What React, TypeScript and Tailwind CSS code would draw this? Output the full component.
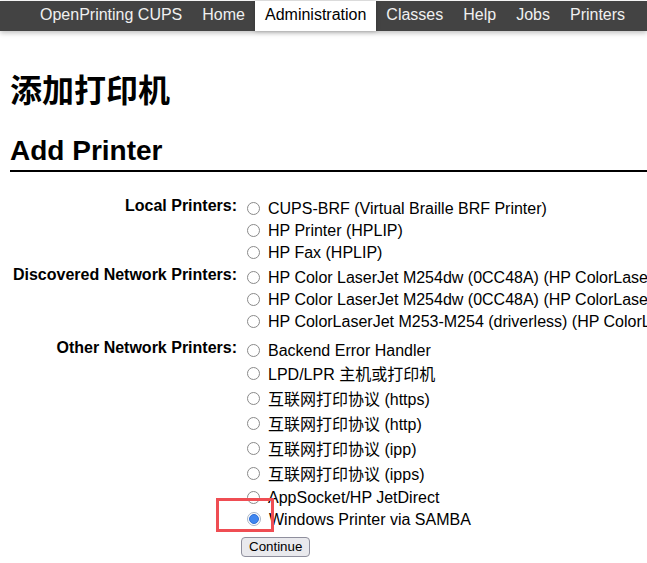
import React from "react";

const SANS = "font-['Liberation_Sans','Noto_Sans_CJK_SC',sans-serif]";

function Radio({ checked = false }: { checked?: boolean }) {
  if (checked) {
    return (
      <span className="ml-[6px] mb-[2px] flex h-[14px] w-[14px] shrink-0 items-center justify-center rounded-full border border-[#a9b4c4] bg-white">
        <span className="h-[10px] w-[10px] rounded-full border border-[#2f6fd6] bg-[#3f86f0]" />
      </span>
    );
  }
  return (
    <span className="ml-[6px] mb-[2px] h-[13px] w-[13px] shrink-0 rounded-full border border-[#8a8a8a] bg-white" />
  );
}

function Row({ text, cjk = false, checked = false }: { text: string; cjk?: boolean; checked?: boolean }) {
  return (
    <div className={`flex items-center whitespace-nowrap ${cjk ? "h-[25px]" : "h-[22px]"}`}>
      <Radio checked={checked} />
      <span className="ml-[8px] text-[16px] leading-[18px] text-black">{text}</span>
    </div>
  );
}

function Label({ children }: { children: React.ReactNode }) {
  return (
    <div className="-mt-px whitespace-nowrap pr-[1px] text-right text-[16px] font-bold leading-[18px] text-black">
      {children}
    </div>
  );
}

const navItems = ["OpenPrinting CUPS", "Home", "Administration", "Classes", "Help", "Jobs", "Printers"];

export default function App() {
  return (
    <div className={`relative h-[563px] w-[647px] overflow-hidden bg-white ${SANS}`}>
      <div className="pt-px">
        <nav className="flex h-[30px] bg-[#434343] pl-[30px] shadow-[0_2px_5px_rgba(0,0,0,0.25)]">
          {navItems.map((item) => (
            <div
              key={item}
              className={`h-[30px] whitespace-nowrap px-[10px] pt-[5px] text-[16px] leading-[18px] ${
                item === "Administration"
                  ? "bg-white text-black shadow-[0_0_4px_rgba(0,0,0,0.25)]"
                  : "text-[#f0f0f0]"
              }`}
            >
              {item}
            </div>
          ))}
        </nav>
      </div>

      <div className="pl-[10px]">
        <h1 className="mt-[37px] font-['Noto_Sans_CJK_SC',sans-serif] text-[32px] font-bold leading-[40px] text-black">
          添加打印机
        </h1>
        <h2 className="mt-[27px] border-b-2 border-black pb-[3px] text-[28px] font-bold leading-[32px] text-black">
          Add Printer
        </h2>

        <div className="mt-[26px] grid grid-cols-[228px_1fr] gap-x-[3px]">
          <Label>Local Printers:</Label>
          <div>
            <Row text="CUPS-BRF (Virtual Braille BRF Printer)" />
            <Row text="HP Printer (HPLIP)" />
            <Row text="HP Fax (HPLIP)" />
          </div>

          <div className="mt-[3px]">
            <Label>Discovered Network Printers:</Label>
          </div>
          <div className="mt-[3px]">
            <Row text="HP Color LaserJet M254dw (0CC48A) (HP ColorLaserJet M254dw)" />
            <Row text="HP Color LaserJet M254dw (0CC48A) (HP ColorLaserJet M254dw)" />
            <Row text="HP ColorLaserJet M253-M254 (driverless) (HP ColorLaserJet M253-M254)" />
          </div>

          <div className="mt-[7px]">
            <Label>Other Network Printers:</Label>
          </div>
          <div className="mt-[7px]">
            <Row text="Backend Error Handler" />
            <Row text="LPD/LPR 主机或打印机" cjk />
            <Row text="互联网打印协议 (https)" cjk />
            <Row text="互联网打印协议 (http)" cjk />
            <Row text="互联网打印协议 (ipp)" cjk />
            <Row text="互联网打印协议 (ipps)" cjk />
            <Row text="AppSocket/HP JetDirect" />
            <Row text="Windows Printer via SAMBA" checked />
            <button className="mt-[6px] h-[20px] rounded-[4px] border border-[#8f8f9d] bg-[#e9e9ed] px-[7px] text-[13.33px] leading-[16px] text-black">
              Continue
            </button>
          </div>
        </div>
      </div>

      <div className="pointer-events-none absolute left-[216px] top-[498px] h-[34px] w-[58px] border-[3px] border-[#ef4d53]" />
    </div>
  );
}
